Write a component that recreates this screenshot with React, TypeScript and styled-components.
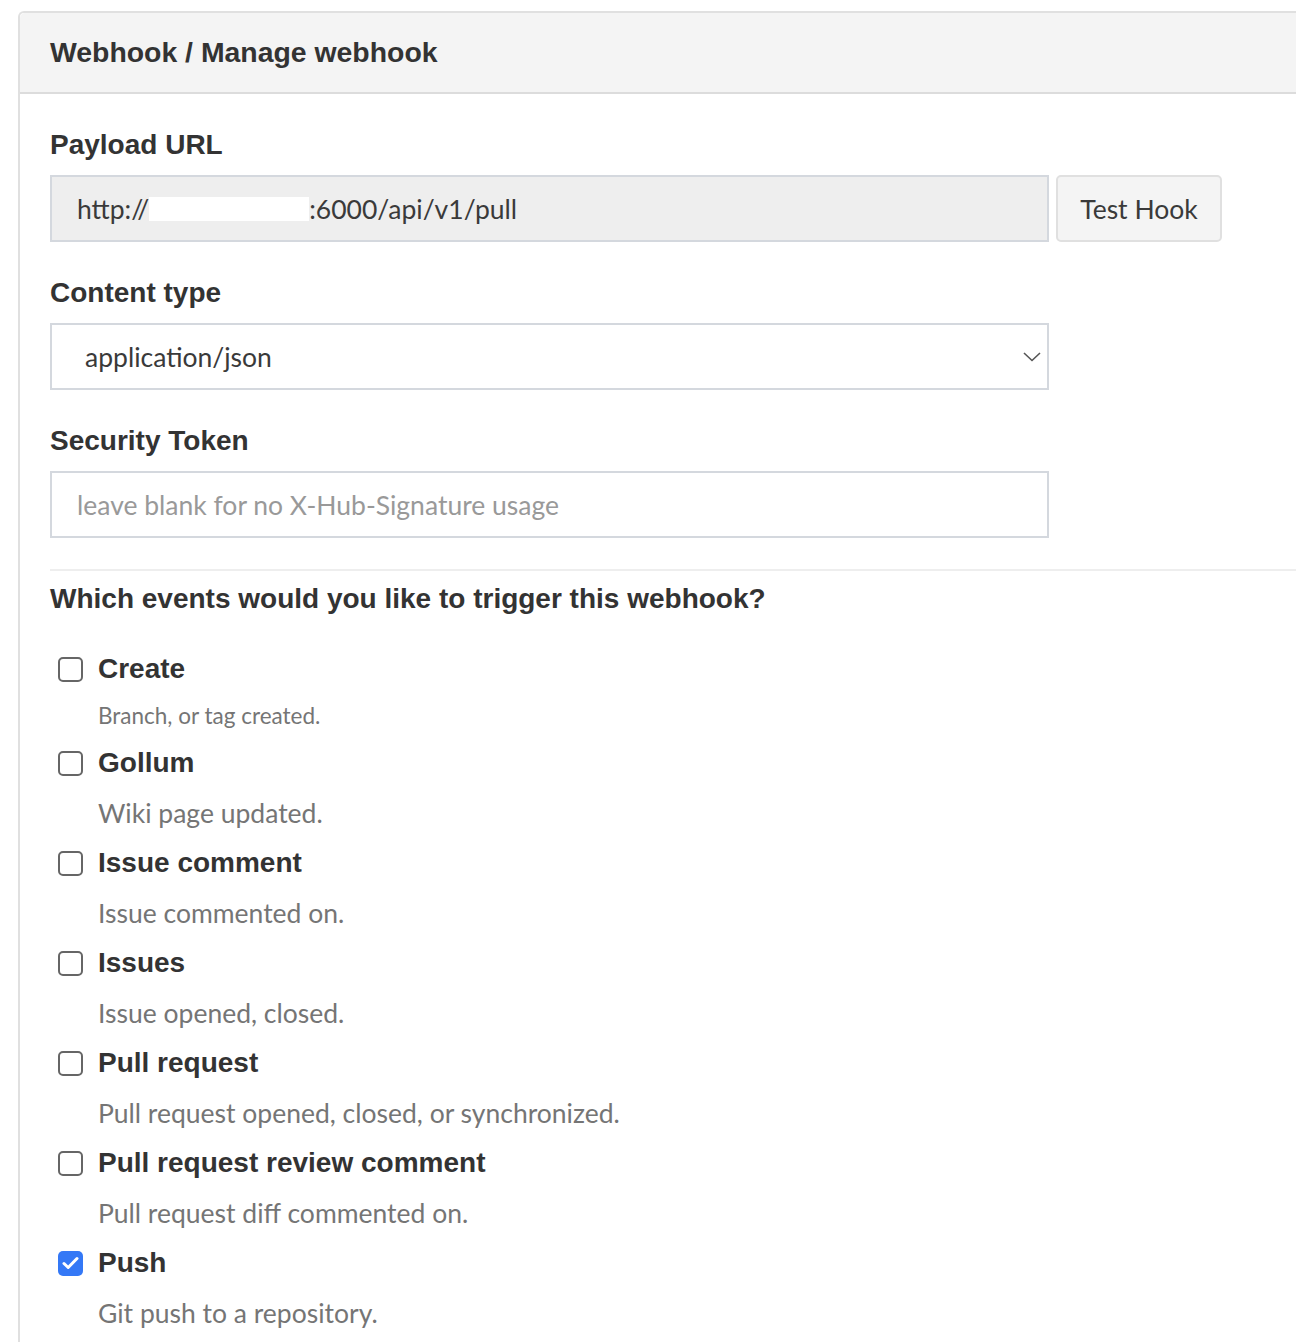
import React, { useState } from "react";
import styled, { createGlobalStyle } from "styled-components";

const GlobalStyle = createGlobalStyle`
  html, body {
    margin: 0;
    padding: 0;
    background: #fff;
  }
  body {
    font-family: "Liberation Sans", Arial, sans-serif;
    color: #333;
  }
`;

interface EventOption {
  key: string;
  title: string;
  desc: string;
  small?: boolean;
}

const events: EventOption[] = [
  { key: "create", title: "Create", desc: "Branch, or tag created.", small: true },
  { key: "gollum", title: "Gollum", desc: "Wiki page updated." },
  { key: "issue_comment", title: "Issue comment", desc: "Issue commented on." },
  { key: "issues", title: "Issues", desc: "Issue opened, closed." },
  { key: "pull_request", title: "Pull request", desc: "Pull request opened, closed, or synchronized." },
  { key: "pr_review_comment", title: "Pull request review comment", desc: "Pull request diff commented on." },
  { key: "push", title: "Push", desc: "Git push to a repository." }
];

const App: React.FC = () => {
  const [checked, setChecked] = useState<Record<string, boolean>>({ push: true });

  const toggle = (key: string) => {
    setChecked({ ...checked, [key]: !checked[key] });
  };

  return (
    <Page>
      <GlobalStyle />
      <Panel>
        <Header>
          <Title>Webhook / Manage webhook</Title>
        </Header>
        <Body>
          <Label>Payload URL</Label>
          <InputRow>
            <ReadOnlyField>
              http://<Redacted />:6000/api/v1/pull
            </ReadOnlyField>
            <Button>Test Hook</Button>
          </InputRow>

          <Label>Content type</Label>
          <Select>
            <span>application/json</span>
            <svg width="18" height="10" viewBox="0 0 18 10" fill="none">
              <path d="M1 1l8 7.5L17 1" stroke="#555" strokeWidth="1.6" />
            </svg>
          </Select>

          <Label>Security Token</Label>
          <TextField placeholder="leave blank for no X-Hub-Signature usage" />

          <Divider />

          <SectionTitle>Which events would you like to trigger this webhook?</SectionTitle>

          <EventList>
            {events.map((ev) => (
              <Event key={ev.key}>
                <EventHead onClick={() => toggle(ev.key)}>
                  <Checkbox $checked={!!checked[ev.key]}>
                    {checked[ev.key] && (
                      <svg width="17" height="14" viewBox="0 0 17 14" fill="none">
                        <path d="M2 7.5l4.2 4L15 2.5" stroke="#fff" strokeWidth="3" strokeLinecap="round" strokeLinejoin="round" />
                      </svg>
                    )}
                  </Checkbox>
                  <EventTitle>{ev.title}</EventTitle>
                </EventHead>
                <EventDesc $small={ev.small}>{ev.desc}</EventDesc>
              </Event>
            ))}
          </EventList>
        </Body>
      </Panel>
    </Page>
  );
};

export default App;

const Page = styled.div`
  padding: 11px 0 0 18px;
  overflow: hidden;
  height: 1342px;
  box-sizing: border-box;
`;

const Panel = styled.div`
  width: 1300px;
  border: 2px solid #e0e0e0;
  border-right: none;
  border-bottom: none;
  border-top-left-radius: 6px;
  min-height: 1340px;
`;

const Header = styled.div`
  height: 79px;
  background: #f4f4f4;
  border-bottom: 2px solid #dcdcdc;
  border-top-left-radius: 5px;
  display: flex;
  align-items: center;
  padding: 0 0 0 30px;
`;

const Title = styled.h2`
  margin: 0;
  font-size: 28.4px;
  font-weight: 700;
  color: #333;
`;

const Body = styled.div`
  padding: 36px 0 0 30px;
`;

const Label = styled.div`
  font-size: 28px;
  font-weight: 700;
  line-height: 30px;
  color: #333;
  margin-bottom: 15px;
`;

const InputRow = styled.div`
  display: flex;
  gap: 7px;
  margin-bottom: 36px;
`;

const fieldFont = `
  font-family: Lato, "Open Sans", sans-serif;
  font-size: 26.5px;
`;

const ReadOnlyField = styled.div`
  width: 999px;
  height: 67px;
  box-sizing: border-box;
  background: #eee;
  border: 2px solid #d4d8de;
  display: flex;
  align-items: center;
  padding-left: 25px;
  ${fieldFont}
  color: #3a3a3a;
`;

const Redacted = styled.span`
  display: inline-block;
  width: 160px;
  height: 24px;
  background: #fff;
`;

const Button = styled.button`
  width: 166px;
  height: 67px;
  box-sizing: border-box;
  background: #f4f4f4;
  border: 2px solid #e0e0e0;
  border-radius: 5px;
  ${fieldFont}
  color: #3a3a3a;
  cursor: pointer;
`;

const Select = styled.div`
  width: 999px;
  height: 67px;
  box-sizing: border-box;
  border: 2px solid #d4d8de;
  background: #fff;
  display: flex;
  align-items: center;
  justify-content: space-between;
  padding: 0 6px 0 33px;
  margin-bottom: 36px;
  ${fieldFont}
  color: #3a3a3a;
`;

const TextField = styled.input`
  display: block;
  width: 999px;
  height: 67px;
  box-sizing: border-box;
  border: 2px solid #d4d8de;
  padding-left: 25px;
  ${fieldFont}
  color: #3a3a3a;
  outline: none;
  &::placeholder {
    color: #999;
  }
`;

const Divider = styled.div`
  height: 2px;
  background: #eee;
  margin: 31px 0 13px;
`;

const SectionTitle = styled.div`
  font-size: 28px;
  font-weight: 700;
  line-height: 30px;
  color: #333;
`;

const EventList = styled.div`
  margin-top: 30px;
  padding-left: 8px;
`;

const Event = styled.div`
  display: flex;
  flex-direction: column;
`;

const EventHead = styled.label`
  display: flex;
  align-items: center;
  height: 50px;
  cursor: pointer;
`;

const Checkbox = styled.span<{ $checked: boolean }>`
  width: 25px;
  height: 25px;
  box-sizing: border-box;
  border-radius: 5px;
  border: ${(p) => (p.$checked ? "none" : "2px solid #666")};
  background: ${(p) => (p.$checked ? "#3478f6" : "#fff")};
  display: flex;
  align-items: center;
  justify-content: center;
  margin-right: 15px;
`;

const EventTitle = styled.span`
  font-size: 28px;
  font-weight: 700;
  color: #333;
`;

const EventDesc = styled.div<{ $small?: boolean }>`
  padding-left: 40px;
  font-family: Lato, "Open Sans", sans-serif;
  font-size: ${(p) => (p.$small ? "22.5px" : "26.5px")};
  line-height: ${(p) => (p.$small ? "44px" : "50px")};
  color: #757575;
`;
